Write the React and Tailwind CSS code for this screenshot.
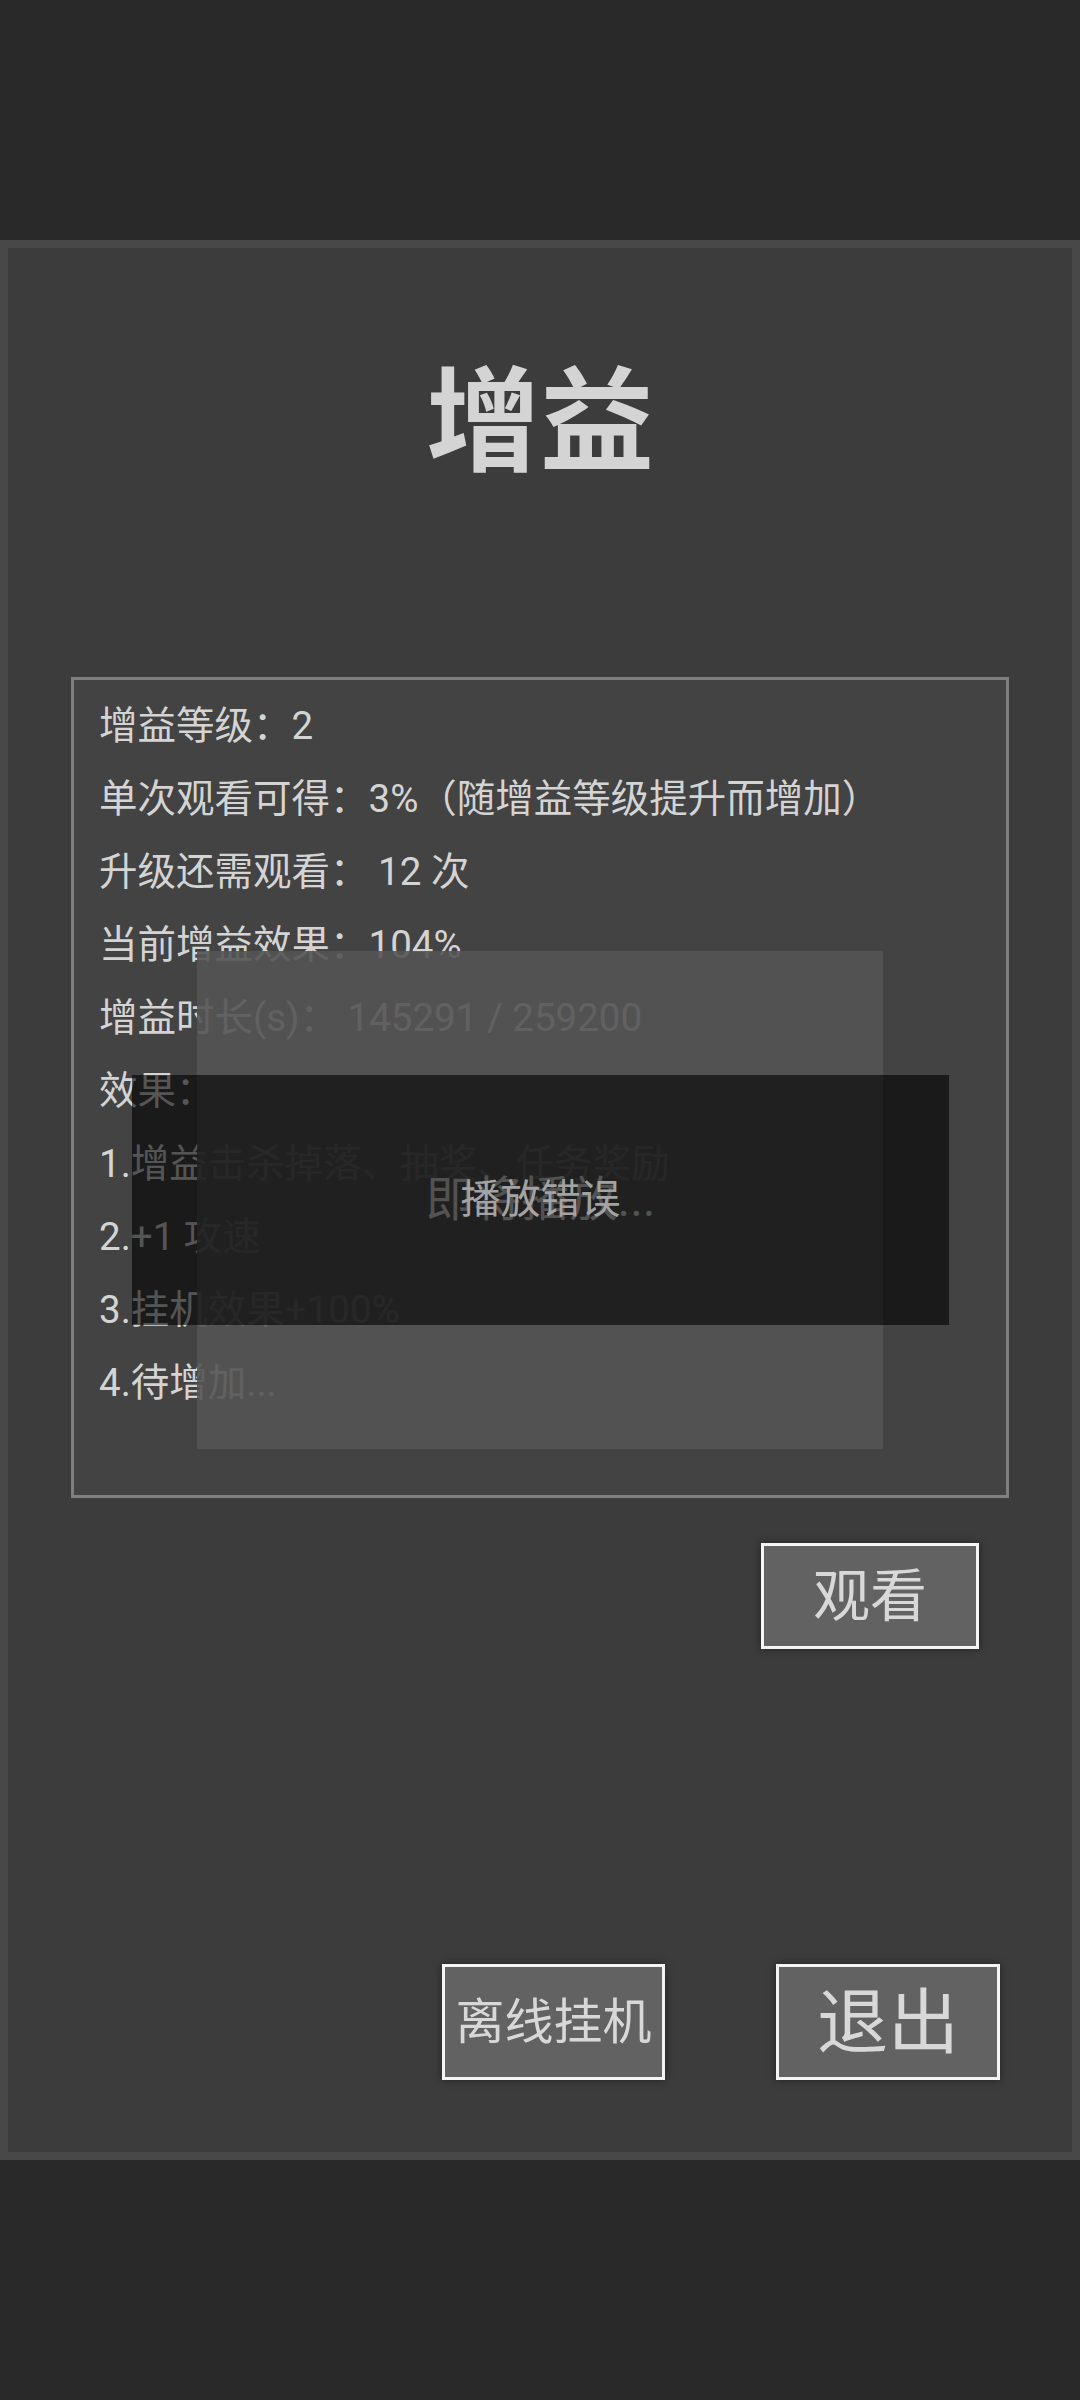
import React from "react";

const FONT = { fontFamily: 'Roboto, "Noto Sans CJK SC", sans-serif' };

function Btn({ children, w, h, size }) {
  return (
    <div
      className={`${w} ${h} ${size} border-[3px] border-[#f4f4f4] bg-[#626262] text-[#d8d8d8] flex items-center justify-center leading-none shadow-[0_0_8px_rgba(0,0,0,0.45)]`}
    >
      {children}
    </div>
  );
}

export default function App() {
  const lines = [
    "增益等级：2",
    "单次观看可得：3%（随增益等级提升而增加）",
    "升级还需观看： 12 次",
    "当前增益效果：104%",
    "增益时长(s)： 145291 / 259200",
    "效果：",
    "1.增益击杀掉落、抽奖、任务奖励",
    "2.+1 攻速",
    "3.挂机效果+100%",
    "4.待增加...",
  ];
  return (
    <div className="relative w-[1080px] h-[2400px] bg-[#292929] flex flex-col" style={FONT}>
      <div className="h-[240px] shrink-0" />
      <div className="h-[1920px] shrink-0 border-[8px] border-[#484848] bg-[#3c3c3c] flex flex-col">
        <div className="h-[429px] shrink-0 pt-[118px] text-center text-[114px] font-bold leading-none text-[#d4d4d4]">
          增益
        </div>
        <div className="mx-[63px] h-[821px] shrink-0 border-[3px] border-[#7f7f7f] bg-[#434343] pl-[25px] pt-[9px] text-[38.5px] leading-[73px] text-[#d4d4d4]">
          {lines.map((l) => (
            <div key={l} className="whitespace-pre">{l}</div>
          ))}
        </div>
        <div className="flex justify-end pr-[93px] mt-[45px]">
          <Btn w="w-[218px]" h="h-[106px]" size="text-[57px]">观看</Btn>
        </div>
        <div className="flex justify-end pr-[72px] mt-[315px] gap-[111px]">
          <Btn w="w-[223px]" h="h-[116px]" size="text-[49px]">离线挂机</Btn>
          <Btn w="w-[224px]" h="h-[116px]" size="text-[71px]">退出</Btn>
        </div>
      </div>
      <div className="h-[240px] shrink-0" />

      {/* toast overlays */}
      <div className="absolute left-[197px] top-[951px] w-[686px] h-[498px] bg-[rgba(84,84,84,0.9)]" />
      <div className="absolute left-[132px] top-[1075px] w-[817px] h-[250px] bg-[rgba(0,0,0,0.6)]" />
      <div className="absolute left-[132px] top-[1075px] w-[817px] h-[250px] flex items-center justify-center">
        <div className="relative flex items-center justify-center">
          <span className="text-[48px] leading-none text-[#525252] whitespace-pre">即将播放...</span>
          <span className="absolute inset-0 flex items-center justify-center text-[40px] leading-none text-[#a3a3a3] whitespace-pre">
            播放错误
          </span>
        </div>
      </div>
    </div>
  );
}
